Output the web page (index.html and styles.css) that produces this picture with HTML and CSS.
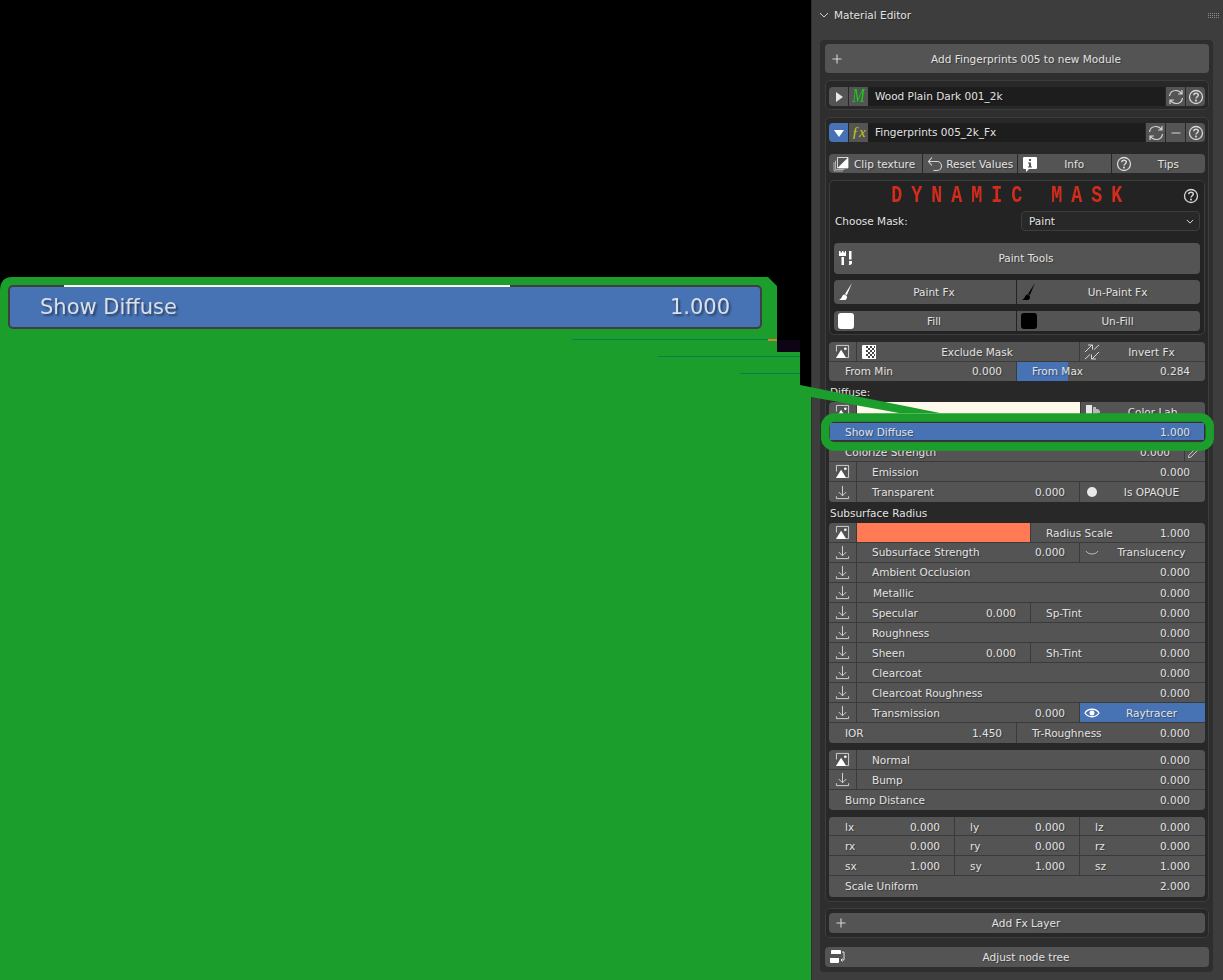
FILE: index.html
```html
<!DOCTYPE html>
<html lang="en">
<head>
    <meta charset="UTF-8">
    <title>Material Editor</title>
    <link rel="stylesheet" href="styles.css">
</head>
<body>
<svg class="defs" width="0" height="0">
    <symbol id="i-img" viewBox="0 0 16 16">
        <path d="M1.500 8V1.500H14.500V14.500H12" fill="none" stroke="currentColor"/>
        <path d="M1 15 6.500 6 12 15z" fill="#fff"/>
        <circle cx="11" cy="5" r="1.400" fill="#fff"/>
    </symbol>
    <symbol id="i-down" viewBox="0 0 16 16">
        <path d="M8 1v10.500M4 7.500l4 4 4-4M1.500 12v2.500h13V12" fill="none" stroke="currentColor"/>
    </symbol>
    <symbol id="i-refresh" viewBox="0 0 16 16">
        <path d="M1.500 7C2 3 5 1.500 8 1.500c2.500 0 4 1 5.500 3M14 1v4h-4M14.500 9c-.5 4-3.500 5.500-6.500 5.500-2.500 0-4-1-5.500-3M2 15v-4h4" fill="none" stroke="currentColor" stroke-width="1.200"/>
    </symbol>
    <symbol id="i-help" viewBox="0 0 16 16">
        <circle cx="8" cy="8" r="6.500" fill="none" stroke="currentColor" stroke-width="1.300"/>
        <path d="M5.700 6.300C5.800 4.800 6.800 4.200 8 4.200c1.400 0 2.300.8 2.300 1.900 0 1.700-2.300 1.600-2.300 3.500" fill="none" stroke="currentColor" stroke-width="1.500"/>
        <rect x="7.100" y="10.600" width="1.800" height="1.800" fill="currentColor"/>
    </symbol>
    <symbol id="i-plus" viewBox="0 0 16 16">
        <path d="M8 3.500v9M3.500 8h9" stroke="currentColor" stroke-width="1.100"/>
    </symbol>
    <symbol id="i-clip" viewBox="0 0 16 16">
        <path d="M1 6v9h9M2.500 4.500v9h9" fill="none" stroke="currentColor" opacity=".7"/>
        <path d="M4.500 1.500h10.500V12H4.500z" fill="none" stroke="currentColor"/>
        <path d="M15 1.500V12H4.500z" fill="#fff"/>
    </symbol>
    <symbol id="i-reset" viewBox="0 0 16 16">
        <path d="M5 1.500 1.500 5.500 5 9.500M1.500 5.500H10a4.500 4.500 0 0 1 0 9H6.500" fill="none" stroke="currentColor" stroke-width="1.100"/>
    </symbol>
    <symbol id="i-info" viewBox="0 0 16 16">
        <path fill-rule="evenodd" d="M2 1h12a1.500 1.500 0 0 1 1 1v10a1.500 1.500 0 0 1-1 1H7l-3 3v-3H2a1.500 1.500 0 0 1-1-1V2a1.500 1.500 0 0 1 1-1zM7 3v2h2V3zM6 6.500v1h1v3H6v1h4v-1H9v-4z" fill="#fff"/>
    </symbol>
    <symbol id="i-tools" viewBox="0 0 16 16">
        <path d="M1 1h1.500v1.500H4V1h1.500v1.500H7V1h1v5H1zM3.500 7H6v8H3.500zM11 1h2.500v8.500H11zM11 11h3v2c0 1.500-1.500 2-3.500 2 1-.7.5-2 .5-4z" fill="#fff"/>
    </symbol>
    <symbol id="i-brush" viewBox="0 0 16 18">
        <path d="M14 0 7 11l1.800 1.300zM6.500 11.500c-3 .5-2 4-5.500 5.500h6.500c1.500-1 2-3 1-4.200z" fill="currentColor"/>
    </symbol>
    <symbol id="i-check" viewBox="0 0 16 16">
        <path d="M2.500 1H15v14H2.500C1.500 15 1 14.500 1 13.500v-11C1 1.500 1.500 1 2.500 1z" fill="#fff"/>
        <path d="M5 2h2v2H5zM9 2h2v2H9zM13 2h1v2h-1zM7 4h2v2H7zM11 4h2v2h-2zM5 6h2v2H5zM9 6h2v2H9zM13 6h1v2h-1zM7 8h2v2H7zM11 8h2v2h-2zM5 10h2v2H5zM9 10h2v2H9zM13 10h1v2h-1zM7 12h2v2H7zM11 12h2v2h-2z" fill="#444"/>
    </symbol>
    <symbol id="i-invert" viewBox="0 0 16 16">
        <path d="M1 8 8 1M4 1h4.500v4.500M15 8l-7 7M12 15H7.500v-4.500M10 5.500 15 1M6 10.500 1 15" fill="none" stroke="currentColor"/>
    </symbol>
    <symbol id="i-lab" viewBox="0 0 16 16">
        <path d="M1 1h6v14H1z" fill="#e8e8e8"/>
        <path d="M8 3h3v2h2l2 2v2h-2l-2 2H8z" fill="#b8b8b8"/>
    </symbol>
    <symbol id="i-drop" viewBox="0 0 16 16">
        <path d="M1.500 14.500 2 12l7-7 2 2-7 7zM9 3.500l3.500 3.500M11 5l3-3.500 1 1L11.500 6" fill="none" stroke="currentColor"/>
    </symbol>
    <symbol id="i-smile" viewBox="0 0 16 16">
        <path d="M2 6c2.500 4 9.500 4 12 0" fill="none" stroke="currentColor" stroke-width=".8"/>
    </symbol>
    <symbol id="i-eye" viewBox="0 0 16 16">
        <path d="M1 8c3-5 11-5 14 0-3 5-11 5-14 0z" fill="none" stroke="#fff" stroke-width="1.300"/>
        <circle cx="8" cy="8" r="2.500" fill="#fff"/>
    </symbol>
    <symbol id="i-nodes" viewBox="0 0 16 16">
        <path d="M3 1h8a1 1 0 0 1 1 1v3H2V2a1 1 0 0 1 1-1zM1 9h9v4a1 1 0 0 1-1 1H2a1 1 0 0 1-1-1z" fill="#fff"/>
        <path d="M13 3h2v8h-3M13.500 9.500 12 11l1.500 1.500" fill="none" stroke="#fff" stroke-width=".8"/>
    </symbol>
</svg>

<div class="panel">
    <div class="panel-head">
        <svg class="chev" viewBox="0 0 10 6"><path d="M1 1l4 4 4-4" fill="none" stroke="currentColor"/></svg>
        <span class="panel-title">Material Editor</span>
        <span class="grip"></span>
    </div>

    <div class="panel-body">
        <div class="btn btn-tall"><svg class="ico"><use href="#i-plus"/></svg><span>Add Fingerprints 005 to new Module</span></div>

        <div class="box box-wood">
            <div class="module">
                <div class="mod-cell arrow"><svg viewBox="0 0 10 10"><path d="M2 0l7 5-7 5z" fill="#e8e8e8"/></svg></div>
                <div class="mod-cell logo logo-m"><span>M</span></div>
                <div class="name">Wood Plain Dark 001_2k</div>
                <div class="mod-cell"><svg class="ico"><use href="#i-refresh"/></svg></div>
                <div class="mod-cell"><svg class="ico"><use href="#i-help"/></svg></div>
            </div>
        </div>

        <div class="box box-fx">
            <div class="module">
                <div class="mod-cell arrow on"><svg viewBox="0 0 10 10"><path d="M0 2h10L5 9z" fill="#fff"/></svg></div>
                <div class="mod-cell logo logo-fx">ƒx</div>
                <div class="name">Fingerprints 005_2k_Fx</div>
                <div class="mod-cell"><svg class="ico"><use href="#i-refresh"/></svg></div>
                <div class="mod-cell"><svg class="ico"><path d="M3.500 8h9" stroke="currentColor" stroke-width="1.200"/></svg></div>
                <div class="mod-cell"><svg class="ico"><use href="#i-help"/></svg></div>
            </div>

            <div class="tabs">
                <div class="tab"><svg class="ico"><use href="#i-clip"/></svg><span class="left">Clip texture</span></div>
                <div class="tab"><svg class="ico"><use href="#i-reset"/></svg><span class="left">Reset Values</span></div>
                <div class="tab"><svg class="ico"><use href="#i-info"/></svg><span>Info</span></div>
                <div class="tab"><svg class="ico"><use href="#i-help"/></svg><span>Tips</span></div>
            </div>

            <div class="mask">
                <div class="mask-head">
                    <div class="mask-title">DYNAMIC MASK</div>
                    <svg class="ico"><use href="#i-help"/></svg>
                </div>
                <div class="mask-choose">
                    <span>Choose Mask:</span>
                    <div class="select"><span>Paint</span><svg class="chev-sm" viewBox="0 0 10 6"><path d="M1 1l4 4 4-4" fill="none" stroke="currentColor" stroke-width="1.200"/></svg></div>
                </div>
                <div class="btn btn-tools"><svg class="ico"><use href="#i-tools"/></svg><span>Paint Tools</span></div>
                <div class="pair pair-paint">
                    <div class="btn"><svg class="ico white"><use href="#i-brush"/></svg><span>Paint Fx</span></div>
                    <div class="btn"><svg class="ico black"><use href="#i-brush"/></svg><span>Un-Paint Fx</span></div>
                </div>
                <div class="pair pair-fill">
                    <div class="btn"><i class="chip chip-white"></i><span>Fill</span></div>
                    <div class="btn"><i class="chip chip-black"></i><span>Un-Fill</span></div>
                </div>
            </div>

            <div class="group g-exclude">
                <div class="row">
                    <div class="cell ic"><svg class="ico"><use href="#i-img"/></svg></div>
                    <div class="cell ibtn"><svg class="ico"><use href="#i-check"/></svg><span>Exclude Mask</span></div>
                    <div class="cell ibtn w125"><svg class="ico"><use href="#i-invert"/></svg><span>Invert Fx</span></div>
                </div>
                <div class="row">
                    <div class="cell w187"><span>From Min</span><span>0.000</span></div>
                    <div class="cell slider"><span>From Max</span><span>0.284</span></div>
                </div>
            </div>

            <div class="label">Diffuse:</div>
            <div class="group">
                <div class="row">
                    <div class="cell ic"><svg class="ico"><use href="#i-img"/></svg></div>
                    <div class="swatch cream"></div>
                    <div class="cell ibtn w125"><svg class="ico"><use href="#i-lab"/></svg><span>Color Lab</span></div>
                </div>
                <div class="row row-on">
                    <div class="cell"><span>Show Diffuse</span><span>1.000</span></div>
                </div>
                <div class="row">
                    <div class="cell"><span>Colorize Strength</span><span>0.000</span></div>
                    <div class="cell w20"><svg class="ico"><use href="#i-drop"/></svg></div>
                </div>
                <div class="row">
                    <div class="cell ic"><svg class="ico"><use href="#i-img"/></svg></div>
                    <div class="cell"><span>Emission</span><span>0.000</span></div>
                </div>
                <div class="row">
                    <div class="cell ic"><svg class="ico"><use href="#i-down"/></svg></div>
                    <div class="cell"><span>Transparent</span><span>0.000</span></div>
                    <div class="cell ibtn w125"><i class="dot"></i><span>Is OPAQUE</span></div>
                </div>
            </div>

            <div class="label">Subsurface Radius</div>
            <div class="group">
                <div class="row">
                    <div class="cell ic"><svg class="ico"><use href="#i-img"/></svg></div>
                    <div class="swatch coral"></div>
                    <div class="cell w174"><span>Radius Scale</span><span>1.000</span></div>
                </div>
                <div class="row row-hi">
                    <div class="cell ic"><svg class="ico"><use href="#i-down"/></svg></div>
                    <div class="cell"><span>Subsurface Strength</span><span>0.000</span></div>
                    <div class="cell ibtn w125"><svg class="ico"><use href="#i-smile"/></svg><span>Translucency</span></div>
                </div>
                <div class="row row-hi">
                    <div class="cell ic"><svg class="ico"><use href="#i-down"/></svg></div>
                    <div class="cell"><span>Ambient Occlusion</span><span>0.000</span></div>
                </div>
                <div class="row">
                    <div class="cell ic"><svg class="ico"><use href="#i-down"/></svg></div>
                    <div class="cell metal"><span>Metallic</span><span>0.000</span></div>
                </div>
                <div class="row">
                    <div class="cell ic"><svg class="ico"><use href="#i-down"/></svg></div>
                    <div class="cell"><span>Specular</span><span>0.000</span></div>
                    <div class="cell w174"><span>Sp-Tint</span><span>0.000</span></div>
                </div>
                <div class="row">
                    <div class="cell ic"><svg class="ico"><use href="#i-down"/></svg></div>
                    <div class="cell"><span>Roughness</span><span>0.000</span></div>
                </div>
                <div class="row">
                    <div class="cell ic"><svg class="ico"><use href="#i-down"/></svg></div>
                    <div class="cell"><span>Sheen</span><span>0.000</span></div>
                    <div class="cell w174"><span>Sh-Tint</span><span>0.000</span></div>
                </div>
                <div class="row">
                    <div class="cell ic"><svg class="ico"><use href="#i-down"/></svg></div>
                    <div class="cell"><span>Clearcoat</span><span>0.000</span></div>
                </div>
                <div class="row">
                    <div class="cell ic"><svg class="ico"><use href="#i-down"/></svg></div>
                    <div class="cell"><span>Clearcoat Roughness</span><span>0.000</span></div>
                </div>
                <div class="row">
                    <div class="cell ic"><svg class="ico"><use href="#i-down"/></svg></div>
                    <div class="cell"><span>Transmission</span><span>0.000</span></div>
                    <div class="cell ibtn w125 blue"><svg class="ico"><use href="#i-eye"/></svg><span>Raytracer</span></div>
                </div>
                <div class="row">
                    <div class="cell w187"><span>IOR</span><span>1.450</span></div>
                    <div class="cell"><span>Tr-Roughness</span><span>0.000</span></div>
                </div>
            </div>

            <div class="group g-next">
                <div class="row">
                    <div class="cell ic"><svg class="ico"><use href="#i-img"/></svg></div>
                    <div class="cell"><span>Normal</span><span>0.000</span></div>
                </div>
                <div class="row">
                    <div class="cell ic"><svg class="ico"><use href="#i-down"/></svg></div>
                    <div class="cell"><span>Bump</span><span>0.000</span></div>
                </div>
                <div class="row">
                    <div class="cell"><span>Bump Distance</span><span>0.000</span></div>
                </div>
            </div>

            <div class="group g-next g-xform">
                <div class="row">
                    <div class="cell w125"><span>lx</span><span>0.000</span></div>
                    <div class="cell"><span>ly</span><span>0.000</span></div>
                    <div class="cell w125"><span>lz</span><span>0.000</span></div>
                </div>
                <div class="row">
                    <div class="cell w125"><span>rx</span><span>0.000</span></div>
                    <div class="cell"><span>ry</span><span>0.000</span></div>
                    <div class="cell w125"><span>rz</span><span>0.000</span></div>
                </div>
                <div class="row">
                    <div class="cell w125"><span>sx</span><span>1.000</span></div>
                    <div class="cell"><span>sy</span><span>1.000</span></div>
                    <div class="cell w125"><span>sz</span><span>1.000</span></div>
                </div>
                <div class="row">
                    <div class="cell"><span>Scale Uniform</span><span>2.000</span></div>
                </div>
            </div>
        </div>

        <div class="box box-add">
            <div class="btn btn-row"><svg class="ico"><use href="#i-plus"/></svg><span>Add Fx Layer</span></div>
        </div>

        <div class="btn btn-row btn-adjust"><svg class="ico"><use href="#i-nodes"/></svg><span>Adjust node tree</span></div>
    </div>
</div>

<!-- highlight drawn over the screenshot -->
<svg class="overlay" viewBox="0 0 1223 980">
    <path d="M0 291Q0 277 12 277L768 277 777 286V352H800V385L940 413H899L811 397V980H0Z" fill="#1c9e2c"/>
    <rect x="825.200" y="417.500" width="384.500" height="29" rx="9" fill="none" stroke="#1c9e2c" stroke-width="8.500"/>
    <rect x="777" y="340" width="23" height="12" fill="#0d0416"/>
    <rect x="572" y="339" width="196" height="1" fill="#0a7d50"/>
    <rect x="768" y="339" width="9" height="2" fill="#e07a30"/>
    <rect x="658" y="356" width="142" height="1" fill="#0a7d50"/>
    <rect x="740" y="373" width="60" height="1" fill="#0a7d50"/>
</svg>

<div class="zoom-bar">
    <i class="zoom-strip"></i>
    <span>Show Diffuse</span>
    <span>1.000</span>
</div>
</body>
</html>
```

FILE: styles.css
```css
*{
    padding:0;
    margin:0;
    box-sizing:border-box;
}
html,body{
    height:980px;
    overflow:hidden;
    background:#000000;
}
body{
    position:relative;
    font-family:"DejaVu Sans",sans-serif;
    font-size:10.5px;
    color:#e2e2e2;
    text-shadow:1px 1px 1px rgba(0,0,0,.35);
}
.defs{
    position:absolute;
}
i{
    display:block;
}
.ico{
    flex:0 0 16px;
    width:16px;
    height:16px;
    color:#d6d6d6;
}
.ico.white{
    color:#ffffff;
}
.ico.black{
    color:#000000;
}

/* panel frame */
.panel{
    margin-left:811px;
    width:412px;
    height:980px;
    background:#3d3d3d;
    border-left:1px solid #303030;
}
.panel-head{
    height:40px;
    padding:0 4px 10px 7px;
    display:flex;
    align-items:center;
}
.chev{
    width:10px;
    height:6px;
    color:#cfcfcf;
}
.panel-title{
    margin-left:5px;
    flex:1;
}
.grip{
    width:11px;
    height:5px;
    background:repeating-linear-gradient(90deg,#8c8c8c 0 1px,transparent 1px 2px);
    -webkit-mask:repeating-linear-gradient(0deg,#000 0 1px,transparent 1px 2px);
    mask:repeating-linear-gradient(0deg,#000 0 1px,transparent 1px 2px);
}
.panel-body{
    margin:0 10px 0 8px;
    padding:4px 4px 5px 5px;
    background:#2e2e2e;
    border-radius:4px;
}

/* buttons */
.btn{
    display:flex;
    align-items:center;
    background:#545454;
    border-radius:4px;
    padding-left:4px;
    flex:1;
}
.btn span{
    flex:1;
    text-align:center;
    padding-right:2px;
}
.btn-tall{
    height:29px;
    padding-top:1px;
}
.btn-row{
    height:20px;
}
.btn-adjust{
    margin-top:9px;
}
.btn-tools{
    height:31px;
    margin-top:12px;
    padding-bottom:1px;
}

/* boxes */
.box{
    background:#282828;
    border:1px solid #3d3d3d;
    border-radius:5px;
}
.box-wood{
    margin-top:7px;
    padding:6px 3px 3px;
}
.box-fx{
    margin-top:7px;
    padding:5px 3px 4px;
}
.box-add{
    margin-top:6px;
    padding:4px 3px;
}

/* module header */
.module{
    display:flex;
    height:19px;
    gap:1px;
    border-radius:4px;
    overflow:hidden;
}
.mod-cell{
    flex:0 0 19px;
    min-width:0;
    background:#545454;
    display:flex;
    align-items:center;
    justify-content:center;
}
.arrow svg{
    width:10px;
    height:10px;
}
.arrow.on{
    background:#4772b3;
}
.logo{
    font-family:"Liberation Serif",serif;
    font-style:italic;
    text-shadow:none;
    line-height:19px;
}
.logo-m{
    color:#14d014;
    font-size:15px;
}
.logo-m span{
    display:block;
    transform:scale(1,1.2);
}
.logo-fx{
    color:#c8c81e;
    font-size:15px;
}
.name{
    flex:1;
    background:#1d1d1d;
    padding-left:7px;
    line-height:19px;
    margin-left:-1px;
}
.tabs{
    display:flex;
    gap:1px;
    height:19px;
    margin-top:12px;
    border-radius:4px;
    overflow:hidden;
}
.tab{
    flex:1;
    display:flex;
    align-items:center;
    background:#545454;
    padding-left:4px;
}
.tab span{
    flex:1;
    text-align:center;
    padding-top:1px;
}
.tab span.left{
    text-align:left;
    padding-left:5px;
    white-space:nowrap;
}
.tab:nth-child(2) span.left{
    padding-left:3px;
}

/* dynamic mask */
.mask{
    margin-top:7px;
    height:155px;
    background:#232323;
    border:1px solid #3d3d3d;
    border-radius:5px;
    padding:0 4px;
}
.mask-head{
    height:30px;
    display:flex;
    align-items:center;
    padding-right:1px;
}
.mask-title{
    flex:1;
    text-align:center;
    font-family:"Liberation Mono",monospace;
    font-weight:bold;
    font-size:23px;
    letter-spacing:11.2px;
    color:#d42c1c;
    white-space:pre;
    text-shadow:none;
    padding:0 0 0 7px;
    transform:scaleX(.8);
}
.mask-choose{
    display:flex;
    align-items:center;
    justify-content:space-between;
    height:20px;
    padding-left:1px;
}
.select{
    width:179px;
    height:20px;
    display:flex;
    align-items:center;
    justify-content:space-between;
    background:#282828;
    border:1px solid #3d3d3d;
    border-radius:4px;
    padding:0 5px 0 7px;
}
.chev-sm{
    width:8px;
    height:5px;
}
.pair{
    display:flex;
    gap:1px;
}
.pair-paint{
    height:24px;
    margin-top:6px;
}
.pair-paint .ico{
    height:18px;
}
.pair-fill{
    height:20px;
    margin-top:7px;
}
.pair .btn{
    border-radius:0;
}
.pair .btn:first-child{
    flex:0 0 182px;
    border-radius:4px 0 0 4px;
}
.pair .btn:last-child{
    border-radius:0 4px 4px 0;
}
.chip{
    flex:0 0 16px;
    height:16px;
    border-radius:3px;
}
.chip-white{
    background:#ffffff;
}
.chip-black{
    background:#000000;
}

/* property rows */
.label{
    height:21px;
    line-height:21px;
    padding:1px 0 0 1px;
}
.group{
    background:#3a3a3a;
    border-radius:4px;
    overflow:hidden;
    display:flex;
    flex-direction:column;
    gap:1px;
}
.g-exclude{
    margin-top:7px;
}
.g-next{
    margin-top:7px;
}
.row{
    display:flex;
    gap:1px;
    height:19px;
}
.row:last-child{
    height:20px;
}
.g-exclude .row:last-child{
    height:19px;
}
.g-xform .row:first-child{
    height:18px;
}
.g-xform .row:last-child{
    height:21px;
}
.cell{
    flex:1;
    min-width:0;
    display:flex;
    align-items:center;
    justify-content:space-between;
    background:#545454;
    padding:1px 14px 0 15px;
    white-space:nowrap;
}
.row:last-child .cell{
    padding-top:0;
}
.g-exclude .row:last-child .cell,
.g-xform .row:last-child .cell,
.row-hi .cell{
    padding-top:0;
    padding-bottom:1px;
}
.row .cell:first-child{
    padding-left:16px;
}
.row .cell:last-child{
    padding-right:15px;
}
.row .cell.ic{
    flex:0 0 27px;
    padding:0;
    justify-content:center;
}
.ic .ico{
    flex-basis:15px;
    width:15px;
    height:15px;
}
.row .cell.ibtn{
    padding:0 0 0 4px;
}
.row-hi .ibtn span{
    padding-bottom:1px;
}
.ibtn span{
    flex:1;
    text-align:center;
    padding-right:2px;
}
.w125{
    flex:0 0 125px;
}
.w174{
    flex:0 0 174px;
}
.w187{
    flex:0 0 187px;
}
.row .cell.w20{
    flex:0 0 20px;
    padding:0 0 0 2px;
}
.w20 .ico{
    flex-basis:15px;
    width:15px;
    height:15px;
}
.slider{
    background:linear-gradient(to right,#4772b3 51px,#545454 51px);
}
.swatch{
    flex:0 0 223px;
}
.cream{
    background:#fff9ec;
}
.coral{
    flex-basis:173px;
    background:#ff7a55;
}
.blue{
    background:#4772b3;
}
.row-on .cell{
    background:#4772b3;
    box-shadow:inset 0 0 0 1px #333333;
}
.cell.metal{
    padding:1px 16px 0 16px;
}
.dot{
    flex:0 0 10px;
    height:10px;
    margin:0 3px;
    border-radius:50%;
    background:#e8e8e8;
}

/* highlight and magnified row, they sit over the panel */
.overlay{
    position:absolute;
    left:0;
    top:0;
    width:1223px;
    height:980px;
}
.zoom-bar{
    position:absolute;
    left:8px;
    top:285px;
    width:754px;
    height:44px;
    display:flex;
    align-items:center;
    justify-content:space-between;
    padding:0 30px;
    background:#4772b3;
    border:2px solid #3f3f3f;
    border-radius:5px;
    font-size:21px;
    color:#dbdfe8;
    text-shadow:2px 2px 2px rgba(0,0,0,.4);
}
.zoom-bar span{
    filter:blur(.7px);
}
.zoom-strip{
    position:absolute;
    left:54px;
    top:-2px;
    width:446px;
    height:2px;
    background:#fff9ec;
}
```
